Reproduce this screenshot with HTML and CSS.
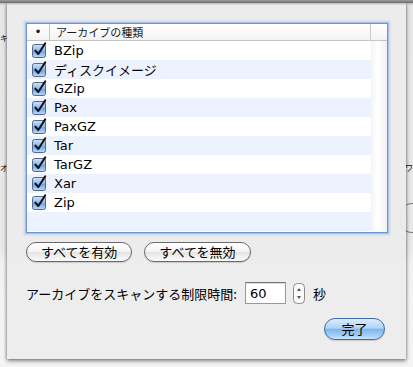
FILE: index.html
```html
<!DOCTYPE html>
<html lang="ja">
<head>
    <meta charset="UTF-8">
    <title>アーカイブの種類</title>
    <link rel="stylesheet" href="styles.css">
</head>
<body>
    <svg class="defs" width="0" height="0">
        <defs>
            <linearGradient id="cbFill" x1="0" y1="0" x2="0" y2="1">
                <stop offset="0" stop-color="#d0e4fb"/>
                <stop offset="0.45" stop-color="#8dbbef"/>
                <stop offset="0.55" stop-color="#6ea6ea"/>
                <stop offset="1" stop-color="#bcdbfa"/>
            </linearGradient>
            <symbol id="check" viewBox="0 0 15 16">
                <rect x="0.5" y="2.5" width="13" height="13" rx="2" fill="url(#cbFill)" stroke="#55688a"/>
                <path d="M3.4 8.6 L6.3 12 L13.2 1.4" fill="none" stroke="#111" stroke-width="2" stroke-linecap="round" stroke-linejoin="round"/>
            </symbol>
        </defs>
    </svg>

    <div class="topbar"></div>

    <!-- window content behind the sheet -->
    <span class="behind behind-left-1">キ</span>
    <span class="behind behind-left-2">オ</span>
    <span class="behind behind-right">ワ</span>
    <span class="behind behind-button"></span>

    <div class="sheet">
        <div class="table">
            <div class="thead">
                <div class="th th-dot">•</div>
                <div class="th th-name">アーカイブの種類</div>
                <div class="th th-corner"></div>
            </div>
            <div class="tbody">
                <div class="rows">
                    <div class="row"><svg class="cb"><use href="#check"/></svg><span>BZip</span></div>
                    <div class="row"><svg class="cb"><use href="#check"/></svg><span>ディスクイメージ</span></div>
                    <div class="row"><svg class="cb"><use href="#check"/></svg><span>GZip</span></div>
                    <div class="row"><svg class="cb"><use href="#check"/></svg><span>Pax</span></div>
                    <div class="row"><svg class="cb"><use href="#check"/></svg><span>PaxGZ</span></div>
                    <div class="row"><svg class="cb"><use href="#check"/></svg><span>Tar</span></div>
                    <div class="row"><svg class="cb"><use href="#check"/></svg><span>TarGZ</span></div>
                    <div class="row"><svg class="cb"><use href="#check"/></svg><span>Xar</span></div>
                    <div class="row"><svg class="cb"><use href="#check"/></svg><span>Zip</span></div>
                    <div class="row"></div>
                </div>
                <div class="gutter"></div>
            </div>
        </div>

        <div class="button-row">
            <button class="btn">すべてを有効</button>
            <button class="btn">すべてを無効</button>
        </div>

        <div class="timeout-row">
            <label for="timeout">アーカイブをスキャンする制限時間:</label>
            <input type="text" id="timeout" value="60">
            <svg class="stepper" width="12" height="21" viewBox="0 0 12 21">
                <rect x="0.5" y="0.5" width="11" height="20" rx="4" fill="#fafafa" stroke="#8a8a8a"/>
                <path d="M4 8 L6 5 L8 8 Z" fill="#555"/>
                <path d="M4 13 L6 16 L8 13 Z" fill="#555"/>
            </svg>
            <span class="unit">秒</span>
        </div>

        <div class="done-row">
            <button class="btn btn-done">完了</button>
        </div>
    </div>
</body>
</html>
```

FILE: styles.css
```css
* {
    margin: 0;
    padding: 0;
    box-sizing: border-box;
}

body {
    position: relative;
    width: 413px;
    height: 367px;
    overflow: hidden;
    font-family: "Lucida Grande", "DejaVu Sans", "Noto Sans CJK JP", sans-serif;
    font-size: 13px;
    color: #000;
    background: linear-gradient(#e6e6e6 0%, #e8e8e8 68%, #f2f2f2 72%, #f4f4f4 100%);
}

.defs {
    position: absolute;
    width: 0;
    height: 0;
}

.topbar {
    height: 3px;
    background: linear-gradient(#9c9c9c, #6c6c6c);
    box-shadow: 0 1px 2px rgba(0, 0, 0, 0.25);
    position: relative;
    z-index: 2;
}

.behind {
    position: absolute;
    font-family: "Noto Sans CJK JP", sans-serif;
    font-size: 8px;
    line-height: 9px;
    color: #111;
}

.behind-left-1 {
    left: 0;
    top: 33px;
}

.behind-left-2 {
    left: 0;
    top: 163px;
}

.behind-right {
    left: 405px;
    top: 163px;
}

.behind-button {
    left: 400px;
    top: 203px;
    width: 13px;
    height: 30px;
    border: 1px solid #777;
    border-right: none;
    border-radius: 12px 0 0 12px;
}

.sheet {
    position: relative;
    z-index: 1;
    width: 399px;
    height: 356px;
    margin-left: 7px;
    padding: 20px 19px 0 19px;
    background: rgba(236, 236, 236, 0.94);
    box-shadow: 0 2px 4px rgba(0, 0, 0, 0.45), -1px 0 2px rgba(0, 0, 0, 0.15), 1px 0 2px rgba(0, 0, 0, 0.15);
    display: flex;
    flex-direction: column;
}

/* table */

.table {
    width: 362px;
    height: 210px;
    border: 1px solid #6f93cc;
    box-shadow: 0 0 0 1px #a9c3ea, 0 0 2px 2px rgba(120, 160, 220, 0.35);
    background: #fff;
    display: flex;
    flex-direction: column;
    overflow: hidden;
}

.thead {
    display: flex;
    height: 17px;
    border-bottom: 1px solid #c4c4c4;
    background: linear-gradient(#ffffff, #f3f3f3);
    font-family: "DejaVu Sans", "Noto Sans CJK JP", sans-serif;
    font-size: 11px;
    color: #1a1a1a;
}

.th {
    display: flex;
    align-items: center;
    border-right: 1px solid #c9c9c9;
}

.th-dot {
    width: 23px;
    justify-content: center;
    font-size: 12px;
}

.th-name {
    flex: 1;
    padding-left: 6px;
}

.th-corner {
    width: 16px;
    border-right: none;
}

.tbody {
    flex: 1;
    display: flex;
}

.rows {
    flex: 1;
}

.row {
    height: 19px;
    display: flex;
    align-items: center;
    padding-left: 5px;
    gap: 7px;
}

.row:nth-child(even) {
    background: #edf3fe;
}

.cb {
    width: 15px;
    height: 16px;
    margin-top: -2px;
}

.gutter {
    width: 16px;
    background: linear-gradient(90deg, #f4f4f4, #ffffff 40%, #f0f0f0);
}

/* buttons */

.button-row {
    display: flex;
    gap: 12px;
    margin-top: 9px;
}

.btn {
    font-family: "Noto Sans CJK JP", sans-serif;
    font-size: 13px;
    color: #000;
    height: 20px;
    padding: 0 14px;
    white-space: nowrap;
    border: 1px solid #6a6a6a;
    border-radius: 10px;
    background: linear-gradient(#ffffff 0%, #f4f4f4 50%, #e4e4e4 52%, #fbfbfb 100%);
    box-shadow: 0 1px 1px rgba(0, 0, 0, 0.15);
    line-height: 18px;
}

.timeout-row {
    display: flex;
    align-items: center;
    margin-top: 20px;
    height: 22px;
}

.timeout-row label {
    font-family: "Noto Sans CJK JP", sans-serif;
    width: 219px;
    white-space: nowrap;
}

.timeout-row input {
    width: 41px;
    height: 22px;
    border: 1px solid #9a9a9a;
    border-top-color: #777;
    box-shadow: inset 0 1px 1px rgba(0, 0, 0, 0.15);
    background: #fff;
    font-family: "DejaVu Sans", sans-serif;
    font-size: 13px;
    padding-left: 4px;
}

.stepper {
    margin-left: 7px;
}

.unit {
    font-family: "Noto Sans CJK JP", sans-serif;
    margin-left: 8px;
}

.done-row {
    display: flex;
    justify-content: flex-end;
    margin-top: 14px;
    padding-right: 2px;
}

.btn-done {
    width: 61px;
    height: 22px;
    border-radius: 11px;
    border-color: #3e6aa8;
    background: linear-gradient(#dcecfc 0%, #b3d4f6 45%, #80b6ef 52%, #a8d0f7 85%, #cfe6fc 100%);
    line-height: 20px;
    padding: 0;
}
```
